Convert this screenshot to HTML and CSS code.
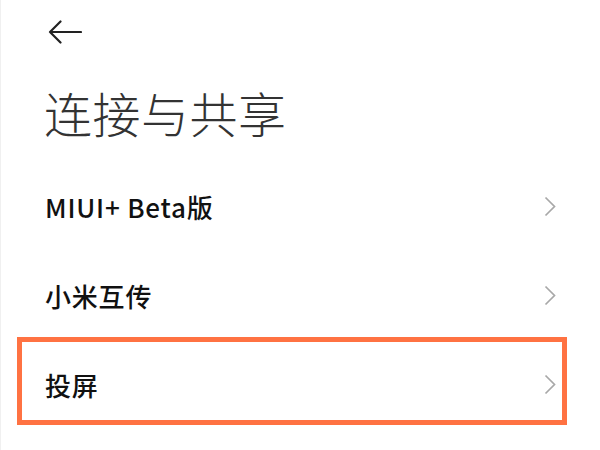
FILE: index.html
```html
<!DOCTYPE html>
<html lang="zh-CN">
<head>
    <meta charset="UTF-8">
    <meta name="viewport" content="width=device-width, initial-scale=1.0">
    <title>连接与共享</title>
    <link rel="stylesheet" href="styles.css">
</head>
<body>
    <div class="page">
        <!-- Barre du haut -->
        <div class="toolbar">
            <svg class="back" width="34" height="24" viewBox="0 0 34 24">
                <path d="M33 12 H2 M12.5 1.5 L2 12 L12.5 22.5" fill="none" stroke="#222" stroke-width="2.2" stroke-linecap="round" stroke-linejoin="round"/>
            </svg>
        </div>

        <div class="title">连接与共享</div>

        <!-- Liste des réglages -->
        <div class="list">
            <div class="row">
                <span class="label">MIUI+ Beta版</span>
                <svg class="chevron" width="12" height="21" viewBox="0 0 12 21">
                    <polyline points="1.5,1.5 10.5,10.5 1.5,19.5" fill="none" stroke="#a8a8a8" stroke-width="1.7"/>
                </svg>
            </div>
            <div class="row">
                <span class="label">小米互传</span>
                <svg class="chevron" width="12" height="21" viewBox="0 0 12 21">
                    <polyline points="1.5,1.5 10.5,10.5 1.5,19.5" fill="none" stroke="#a8a8a8" stroke-width="1.7"/>
                </svg>
            </div>
            <div class="row">
                <span class="label">投屏</span>
                <svg class="chevron" width="12" height="21" viewBox="0 0 12 21">
                    <polyline points="1.5,1.5 10.5,10.5 1.5,19.5" fill="none" stroke="#a8a8a8" stroke-width="1.7"/>
                </svg>
                <div class="highlight"></div>
            </div>
        </div>
    </div>
</body>
</html>
```

FILE: styles.css
```css
body {
    margin: 0;
    padding: 0;
    background-color: #fff;
    font-family: "Noto Sans CJK SC", "Noto Sans", sans-serif;
    color: #111;
}
.page {
    width: 600px;
    height: 450px;
    border-left: 1px solid #f0f0f0;
    box-sizing: border-box;
    overflow: hidden;
}
.toolbar {
    height: 63px;
    display: flex;
    align-items: center;
    padding-left: 47px;
}
.back {
    display: block;
}
.title {
    margin-top: 21px;
    padding-left: 43px;
    font-size: 48px;
    line-height: 56px;
    font-weight: 300;
    color: #333;
    letter-spacing: 0.5px;
}
.list {
    margin-top: 22px;
    display: flex;
    flex-direction: column;
}
.row {
    position: relative;
    height: 89px;
    display: flex;
    align-items: center;
    justify-content: space-between;
    padding: 0 44px 0 44px;
}
.label {
    font-size: 26px;
    font-weight: 500;
    color: #111;
    letter-spacing: 0.8px;
}
.chevron {
    display: block;
}
/* Cadre orange de mise en évidence */
.highlight {
    position: absolute;
    left: 16px;
    right: 33px;
    top: -3px;
    bottom: 4px;
    border: 5px solid #ff7242;
}
```
